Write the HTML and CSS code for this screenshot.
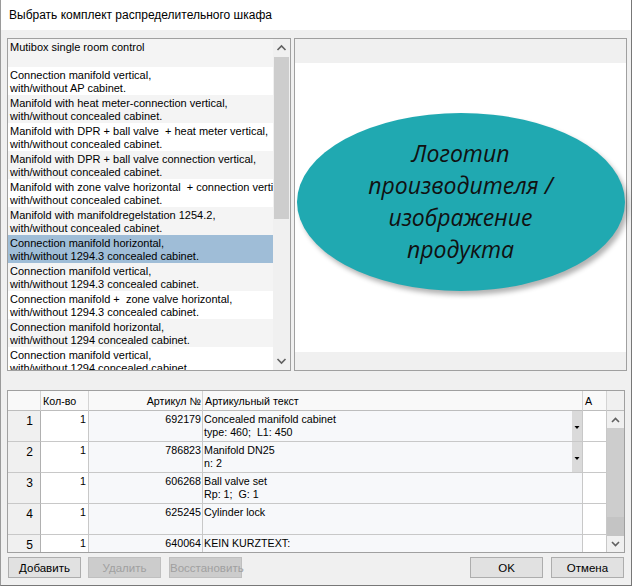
FILE: index.html
```html
<!DOCTYPE html>
<html>
<head>
<meta charset="utf-8">
<title>Выбрать комплект распределительного шкафа</title>
<link rel="stylesheet" href="styles.css">
</head>
<body>
<div class="window">
  <div class="titlebar">Выбрать комплект распределительного шкафа</div>
  <div class="body">
    <div class="top">
      <div class="listbox">
        <div class="items">
          <div class="item alt">Mutibox single room control</div>
          <div class="item">Connection manifold vertical,
with/without AP cabinet.</div>
          <div class="item alt">Manifold with heat meter-connection vertical,
with/without concealed cabinet.</div>
          <div class="item">Manifold with DPR + ball valve  + heat meter vertical,
with/without concealed cabinet.</div>
          <div class="item alt">Manifold with DPR + ball valve connection vertical,
with/without concealed cabinet.</div>
          <div class="item">Manifold with zone valve horizontal  + connection vertical,
with/without concealed cabinet.</div>
          <div class="item alt">Manifold with manifoldregelstation 1254.2,
with/without concealed cabinet.</div>
          <div class="item selected">Connection manifold horizontal,
with/without 1294.3 concealed cabinet.</div>
          <div class="item alt">Connection manifold vertical,
with/without 1294.3 concealed cabinet.</div>
          <div class="item">Connection manifold +  zone valve horizontal,
with/without 1294.3 concealed cabinet.</div>
          <div class="item alt">Connection manifold horizontal,
with/without 1294 concealed cabinet.</div>
          <div class="item">Connection manifold vertical,
with/without 1294 concealed cabinet.</div>
        </div>
        <div class="vscroll list-scroll">
          <div class="sb-btn"><svg width="17" height="18" viewBox="0 0 17 18"><polyline points="4.5,11 8.5,7 12.5,11" fill="none" stroke="#606060" stroke-width="1.6"/></svg></div>
          <div class="sb-thumb"></div>
          <div class="sb-track"></div>
          <div class="sb-btn"><svg width="17" height="18" viewBox="0 0 17 18"><polyline points="4.5,7 8.5,11 12.5,7" fill="none" stroke="#606060" stroke-width="1.6"/></svg></div>
        </div>
      </div>
      <div class="preview">
        <div class="strip strip-top"></div>
        <div class="image">
          <div class="logo">Логотип<br>производителя /<br>изображение<br>продукта</div>
        </div>
        <div class="strip strip-bottom"></div>
      </div>
    </div>

    <div class="grid">
      <div class="ghead">
        <div class="hc"></div>
        <div class="hc">Кол-во</div>
        <div class="hc right">Артикул №</div>
        <div class="hc">Артикульный текст</div>
        <div class="hc">A</div>
        <div class="hc corner"></div>
      </div>
      <div class="gbody">
        <div class="rows">
          <div class="row">
            <div class="c rh">1</div>
            <div class="c qty">1</div>
            <div class="c art">692179</div>
            <div class="c txt"><span class="t">Concealed manifold cabinet
type: 460;  L1: 450</span><span class="dd"><svg width="10" height="30" viewBox="0 0 10 30"><polygon points="2.5,15 7.5,15 5,18" fill="#000"/></svg></span></div>
            <div class="c a"></div>
          </div>
          <div class="row">
            <div class="c rh">2</div>
            <div class="c qty">1</div>
            <div class="c art">786823</div>
            <div class="c txt"><span class="t">Manifold DN25
n: 2</span><span class="dd"><svg width="10" height="30" viewBox="0 0 10 30"><polygon points="2.5,15 7.5,15 5,18" fill="#000"/></svg></span></div>
            <div class="c a"></div>
          </div>
          <div class="row">
            <div class="c rh">3</div>
            <div class="c qty">1</div>
            <div class="c art">606268</div>
            <div class="c txt"><span class="t">Ball valve set
Rp: 1;  G: 1</span></div>
            <div class="c a"></div>
          </div>
          <div class="row">
            <div class="c rh">4</div>
            <div class="c qty">1</div>
            <div class="c art">625245</div>
            <div class="c txt"><span class="t">Cylinder lock</span></div>
            <div class="c a"></div>
          </div>
          <div class="row">
            <div class="c rh">5</div>
            <div class="c qty">1</div>
            <div class="c art">640064</div>
            <div class="c txt"><span class="t">KEIN KURZTEXT:</span></div>
            <div class="c a"></div>
          </div>
        </div>
        <div class="vscroll grid-scroll">
          <div class="sb-btn"><svg width="17" height="17" viewBox="0 0 17 17"><polyline points="5,11 8.5,7.5 12,11" fill="none" stroke="#606060" stroke-width="1.6"/></svg></div>
          <div class="sb-thumb"></div>
          <div class="sb-thumb2"></div>
          <div class="sb-btn"><svg width="17" height="16" viewBox="0 0 17 16"><polyline points="5,6 8.5,9.5 12,6" fill="none" stroke="#606060" stroke-width="1.6"/></svg></div>
        </div>
      </div>
    </div>

    <div class="buttons">
      <button class="btn">Добавить</button>
      <button class="btn disabled">Удалить</button>
      <button class="btn disabled">Восстановить</button>
      <div class="spacer"></div>
      <button class="btn">OK</button>
      <button class="btn">Отмена</button>
    </div>
  </div>
</div>
</body>
</html>
```

FILE: styles.css
```css
* { box-sizing: border-box; }
html, body { margin: 0; padding: 0; }
body {
  font-family: "Liberation Sans", Arial, sans-serif;
  font-size: 11px;
  color: #000;
  background: #f0f0f0;
}
.window {
  width: 632px;
  height: 586px;
  border-left: 1px solid #9a9a9a;
  border-right: 1px solid #777;
  border-bottom: 1px solid #777;
  background: #f0f0f0;
  display: flex;
  flex-direction: column;
}
.titlebar {
  height: 30px;
  background: #fff;
  padding-left: 8px;
  line-height: 30px;
  font-size: 12px;
  color: #000;
}
.body {
  flex: 1;
  padding: 8px 4px 0 6px;
  display: flex;
  flex-direction: column;
}
.top {
  display: flex;
  gap: 3px;
  height: 333px;
}
.listbox {
  width: 284px;
  height: 333px;
  border: 1px solid #a0a0a0;
  background: #fff;
  display: flex;
}
.items {
  flex: 1;
  overflow: hidden;
}
.item {
  height: 28px;
  padding: 2px 0 0 2px;
  line-height: 13px;
  white-space: pre;
  overflow: hidden;
  background: #fff;
}
.item.alt { background: #f4f4f4; }
.item.selected { background: #9fbdd7; }

.vscroll {
  width: 17px;
  background: #f0f0f0;
  display: flex;
  flex-direction: column;
}
.sb-btn { display: flex; }
.sb-btn svg { display: block; }
.list-scroll .sb-thumb { height: 162px; background: #cdcdcd; margin: 0 1px; }
.list-scroll .sb-track { flex: 1; }

.preview {
  width: 333px;
  height: 333px;
  border: 1px solid #a0a0a0;
  display: flex;
  flex-direction: column;
}
.strip { background: #f0f0f0; }
.strip-top { height: 24px; }
.strip-bottom { height: 18px; }
.image {
  flex: 1;
  background: #fff;
  display: flex;
  justify-content: center;
  padding-top: 50px;
}
.logo {
  width: 328px;
  height: 178px;
  border-radius: 50%;
  background: #20a9b1;
  box-shadow: 3px 4px 5px rgba(0, 0, 0, 0.3);
  display: flex;
  align-items: center;
  justify-content: center;
  text-align: center;
  font-family: "Open Sans", "Noto Sans", sans-serif;
  font-style: italic;
  font-size: 23px;
  line-height: 32px;
  color: #111;
  padding-bottom: 2px;
}

.grid {
  margin-top: 19px;
  width: 618px;
  height: 163px;
  border: 1px solid #a0a0a0;
  background: #fff;
  display: flex;
  flex-direction: column;
  font-size: 10.7px;
}
.ghead {
  display: grid;
  grid-template-columns: 33px 48px 114px 380px 24px 17px;
  height: 20px;
  background: #f9f9f9;
}
.hc {
  border-right: 1px solid #d4d4d4;
  border-bottom: 1px solid #bdbdbd;
  padding: 4px 0 0 2px;
  white-space: nowrap;
}
.hc.right { text-align: right; padding: 4px 1px 0 0; }
.hc.corner { border-right: none; background: #f0f0f0; }
.gbody {
  flex: 1;
  display: flex;
  overflow: hidden;
}
.rows {
  flex: 1;
  overflow: hidden;
}
.row {
  display: grid;
  grid-template-columns: 33px 48px 114px 380px 24px;
  height: 31px;
}
.c {
  border-right: 1px solid #c8c8c8;
  border-bottom: 1px solid #c8c8c8;
  line-height: 12.5px;
  padding-top: 2px;
}
.c.rh {
  background: #f0f0f0;
  text-align: right;
  padding: 4px 7px 0 0;
  font-size: 12px;
  border-right-color: #b0b0b0;
}
.c.qty {
  background: #fff;
  text-align: right;
  padding-right: 2px;
}
.c.art {
  background: #f7f8fa;
  text-align: right;
  padding-right: 1px;
}
.c.txt {
  background: #f7f8fa;
  display: flex;
  padding: 0;
}
.c.txt .t {
  flex: 1;
  padding: 2px 0 0 1px;
  white-space: pre;
}
.dd {
  width: 10px;
  background: #dadada;
  display: flex;
}
.dd svg { display: block; }
.c.a { background: #fff; }
.grid-scroll .sb-thumb { height: 89px; background: #cdcdcd; }
.grid-scroll .sb-thumb2 { flex: 1; background: #c4c4c4; }

.buttons {
  margin-top: 4px;
  height: 21px;
  display: flex;
  gap: 7px;
  padding: 0 3px 0 1px;
}
.spacer { flex: 1; }
.btn {
  width: 73px;
  height: 21px;
  margin: 0;
  padding: 0;
  border: 1px solid #adadad;
  background: #e1e1e1;
  font-family: "Liberation Sans", Arial, sans-serif;
  font-size: 11.5px;
  color: #000;
}
.btn.disabled {
  background: #cccccc;
  border-color: #bfbfbf;
  color: #a0a0a0;
}
.buttons .btn:nth-child(3) { margin-left: 1px; }
.buttons .btn:last-child { margin-left: 1px; }
```
